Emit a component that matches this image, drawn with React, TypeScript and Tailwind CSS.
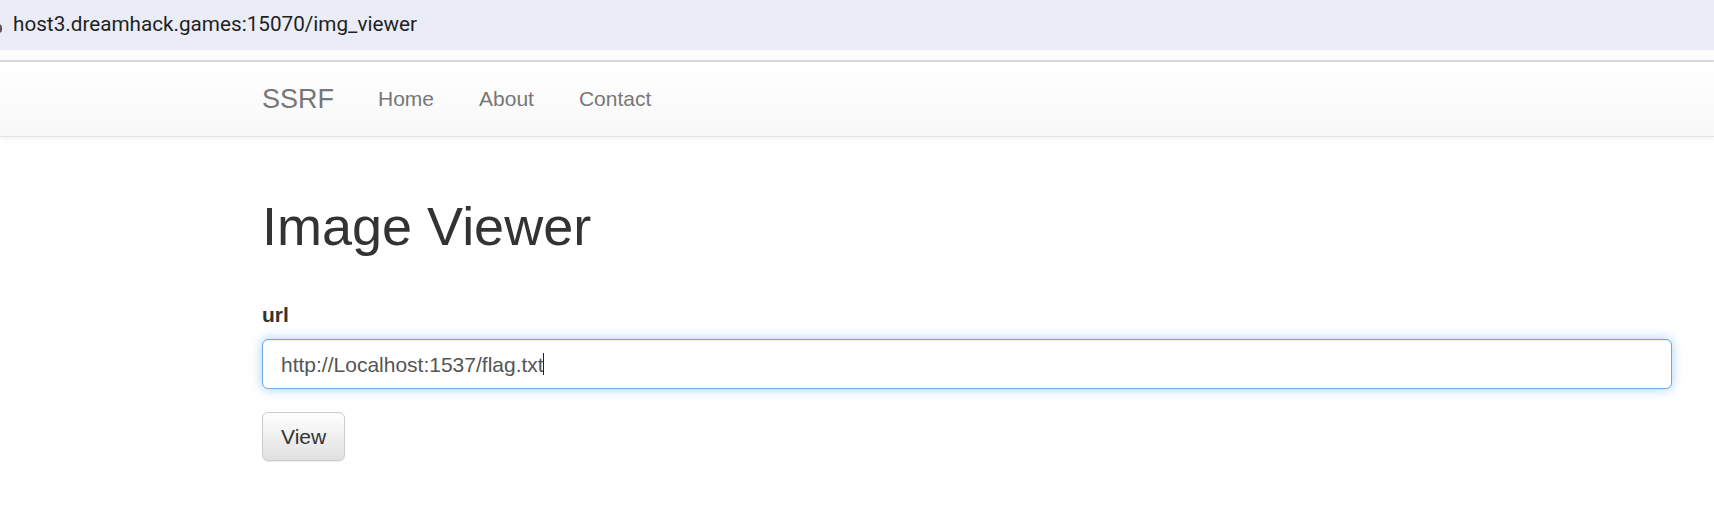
import React from 'react';

// 頂部網址列
const AddressBar: React.FC<{ url: string }> = ({ url }) => (
  <div className="relative h-[50px] bg-[#eaedf7] flex items-center overflow-hidden">
    <span className="absolute left-[-5px] top-[24px] w-[7px] h-[9px] rounded-full border-2 border-[#555]" />
    <span className="pl-[13px] text-[20.7px] text-[#1f1f1f] font-['Roboto',sans-serif]">{url}</span>
  </div>
);

// 導覽列
const Navbar: React.FC = () => (
  <nav className="h-[75px] border-b border-[#e3e3e3] bg-linear-to-b from-white to-[#f8f8f8] shadow-[0_1px_7px_rgba(0,0,0,0.075)]">
    <div className="h-full pl-[262px] flex items-center text-[#777]">
      <span className="text-[27px]">SSRF</span>
      <ul className="ml-[44px] flex gap-[45px] text-[21px]">
        <li>Home</li>
        <li>About</li>
        <li>Contact</li>
      </ul>
    </div>
  </nav>
);

export default function App() {
  return (
    <div className="min-h-screen bg-white font-['Liberation_Sans',Arial,sans-serif] text-[#333]">
      <AddressBar url="host3.dreamhack.games:15070/img_viewer" />
      <div className="h-[10px] bg-[#fdfdfd]" />
      <div className="h-[2px] bg-[#dedede]" />
      <Navbar />

      <main className="pl-[262px] w-[1672px]">
        <h1 className="mt-[60px] text-[54px] leading-[1.1] font-medium">Image Viewer</h1>

        <form className="mt-[44px]">
          <label className="block text-[21px] leading-[30px] font-bold mb-[9px]">url</label>
          {/* 聚焦狀態的輸入框 */}
          <div className="h-[50px] rounded-[6px] border border-[#6fa9e0] bg-white px-[18px] flex items-center text-[21px] text-[#555] shadow-[inset_0_1px_1px_rgba(0,0,0,0.075),0_0_12px_rgba(102,175,233,0.6)]">
            <span>http://Localhost:1537/flag.txt</span>
            <span className="ml-[-1px] w-[1px] h-[22px] bg-[#222]" />
          </div>

          <button
            type="button"
            className="mt-[23px] h-[49px] px-[18px] rounded-[6px] border border-[#ccc] bg-linear-to-b from-white to-[#e0e0e0] text-[21px] text-[#333] shadow-[inset_0_1px_0_rgba(255,255,255,0.15),0_1px_1px_rgba(0,0,0,0.075)]"
          >
            View
          </button>
        </form>
      </main>
    </div>
  );
}
